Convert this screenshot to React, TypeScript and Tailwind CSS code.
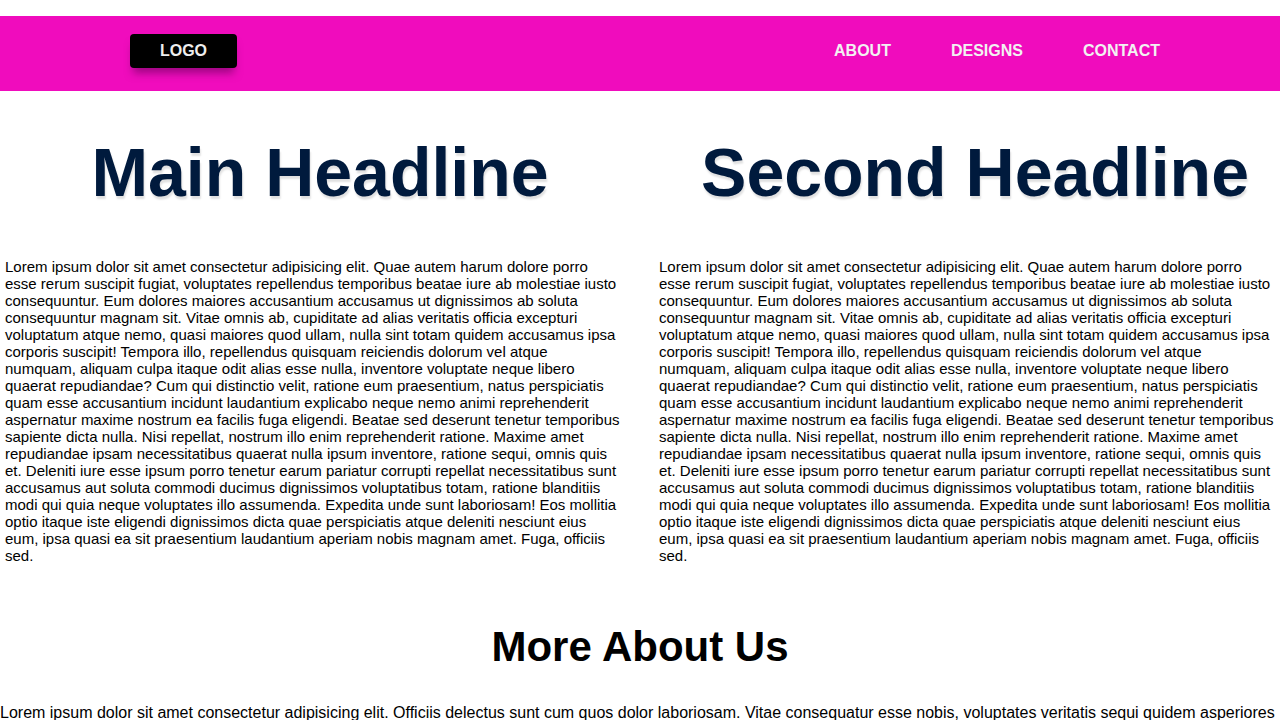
import React from "react";

const LOREM =
  "Lorem ipsum dolor sit amet consectetur adipisicing elit. Quae autem harum dolore porro esse rerum suscipit fugiat, voluptates repellendus temporibus beatae iure ab molestiae iusto consequuntur. Eum dolores maiores accusantium accusamus ut dignissimos ab soluta consequuntur magnam sit. Vitae omnis ab, cupiditate ad alias veritatis officia excepturi voluptatum atque nemo, quasi maiores quod ullam, nulla sint totam quidem accusamus ipsa corporis suscipit! Tempora illo, repellendus quisquam reiciendis dolorum vel atque numquam, aliquam culpa itaque odit alias esse nulla, inventore voluptate neque libero quaerat repudiandae? Cum qui distinctio velit, ratione eum praesentium, natus perspiciatis quam esse accusantium incidunt laudantium explicabo neque nemo animi reprehenderit aspernatur maxime nostrum ea facilis fuga eligendi. Beatae sed deserunt tenetur temporibus sapiente dicta nulla. Nisi repellat, nostrum illo enim reprehenderit ratione. Maxime amet repudiandae ipsam necessitatibus quaerat nulla ipsum inventore, ratione sequi, omnis quis et. Deleniti iure esse ipsum porro tenetur earum pariatur corrupti repellat necessitatibus sunt accusamus aut soluta commodi ducimus dignissimos voluptatibus totam, ratione blanditiis modi qui quia neque voluptates illo assumenda. Expedita unde sunt laboriosam! Eos mollitia optio itaque iste eligendi dignissimos dicta quae perspiciatis atque deleniti nesciunt eius eum, ipsa quasi ea sit praesentium laudantium aperiam nobis magnam amet. Fuga, officiis sed.";

const MORE =
  "Lorem ipsum dolor sit amet consectetur adipisicing elit. Officiis delectus sunt cum quos dolor laboriosam. Vitae consequatur esse nobis, voluptates veritatis sequi quidem asperiores eveniet ipsam, nulla voluptatum quisquam.";

export default function App() {
  return (
    <div className="bg-white text-black overflow-hidden h-[720px]" style={{ fontFamily: '"Liberation Sans", Arial, sans-serif' }}>
      <div className="h-4" />
      <nav className="h-[75px] bg-[#f00cbd] flex items-start pt-[18px] pl-[130px] pr-[120px]">
        <div className="h-[34px] w-[107px] bg-black rounded-[4px] flex items-center justify-center text-[16px] font-bold text-[#eeeeee] shadow-[0_8px_8px_-3px_rgba(90,0,80,0.55)]">
          LOGO
        </div>
        <div className="flex-1" />
        <ul className="flex gap-[60px] h-[34px] items-center text-[16px] font-bold text-[#f2f2f2]">
          <li>ABOUT</li>
          <li>DESIGNS</li>
          <li>CONTACT</li>
        </ul>
      </nav>
      <div className="flex pt-[42px] text-[#001a3d] font-bold text-[68px] leading-[78px] [text-shadow:1px_3px_2px_rgba(0,0,0,0.12)]">
        <h1 className="w-[640px] text-center">Main Headline</h1>
        <h1 className="flex-1 pl-[30px] text-center">Second Headline</h1>
      </div>
      <div className="flex gap-[38px] px-[5px] pt-[47px] text-[15px] leading-[17px]">
        <p className="w-[617px]">{LOREM}</p>
        <p className="w-[617px]">{LOREM}</p>
      </div>
      <h2 className="text-center font-bold text-[42px] leading-[48px] mt-[59px]">More About Us</h2>
      <p className="mt-[33px] text-[16px] leading-[18px]">{MORE}</p>
    </div>
  );
}
